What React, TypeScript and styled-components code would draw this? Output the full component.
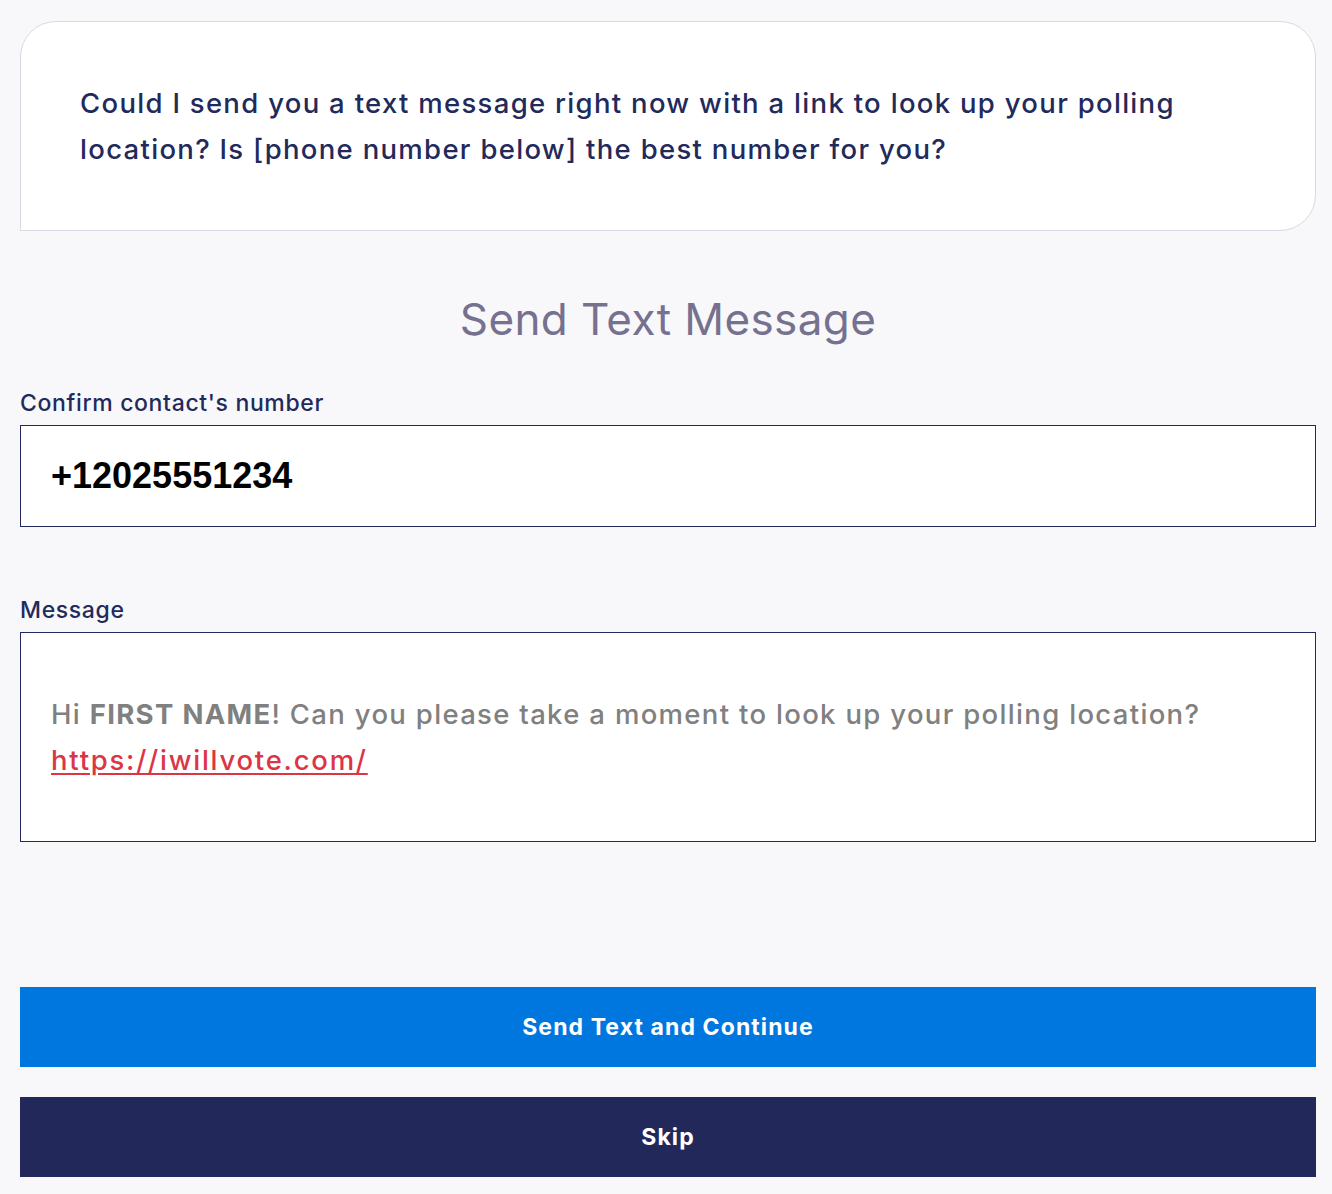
import * as React from 'react'
import styled, { createGlobalStyle } from 'styled-components'

const GlobalStyle = createGlobalStyle`
  html, body {
    margin: 0;
    padding: 0;
    background: #f8f8fa;
  }
  body {
    font-family: Inter, 'Noto Sans', sans-serif;
  }
  * {
    box-sizing: border-box;
  }
`

const SPage = styled.div`
  padding: 21px 16px 16px 20px;
  display: flex;
  flex-direction: column;
`

const SScriptCard = styled.div`
  background: #ffffff;
  border: 1px solid #d9d9e3;
  border-radius: 36px 36px 36px 0;
  padding: 58px 59px 0 59px;
  height: 210px;
  color: #222a5c;
  font-size: 27.5px;
  font-weight: 500;
  line-height: 46px;
  letter-spacing: 1.3px;
`

const STitle = styled.h2`
  margin: 62px 0 0;
  text-align: center;
  font-size: 44px;
  font-weight: 400;
  color: #75718f;
  line-height: 52px;
  letter-spacing: 0.4px;
`

const SField = styled.div<{ gap: number }>`
  display: flex;
  flex-direction: column;
  margin-top: ${({ gap }) => gap}px;
`

const SLabel = styled.label`
  font-size: 23px;
  font-weight: 500;
  color: #222a5c;
  line-height: 28px;
  letter-spacing: 0.65px;
  margin-bottom: 8px;
`

const SInput = styled.div`
  background: #ffffff;
  border: 1px solid #222a5c;
  height: 102px;
  display: flex;
  align-items: center;
  padding: 0 30px;
  font-family: 'Liberation Sans', Arial, sans-serif;
  font-weight: 700;
  font-size: 36px;
  color: #000000;
`

const STextArea = styled.div`
  background: #ffffff;
  border: 1px solid #222a5c;
  height: 210px;
  padding: 58px 30px 0;
  font-size: 27.5px;
  font-weight: 500;
  line-height: 46px;
  letter-spacing: 1.32px;
  color: #808080;
`

const SBold = styled.strong`
  font-weight: 700;
`

const SLink = styled.a`
  color: #dc3545;
  text-decoration: underline;
  text-underline-offset: 3px;
  letter-spacing: 1.75px;
`

const SButtons = styled.div`
  display: flex;
  flex-direction: column;
  gap: 30px;
  margin-top: 145px;
`

const SButton = styled.button<{ variant: 'primary' | 'dark' }>`
  height: 80px;
  border: none;
  background: ${({ variant }) => (variant === 'primary' ? '#0077df' : '#22295a')};
  color: #ffffff;
  font-family: Inter, 'Noto Sans', sans-serif;
  font-size: 23px;
  font-weight: 700;
  letter-spacing: 1.1px;
  cursor: pointer;
`

const App = () => {
  return (
    <>
      <GlobalStyle />
      <SPage>
        <SScriptCard>
          Could I send you a text message right now with a link to look up your polling
          location? Is [phone number below] the best number for you?
        </SScriptCard>
        <STitle>Send Text Message</STitle>
        <SField gap={44}>
          <SLabel>Confirm contact's number</SLabel>
          <SInput>+12025551234</SInput>
        </SField>
        <SField gap={69}>
          <SLabel>Message</SLabel>
          <STextArea>
            Hi <SBold>FIRST NAME</SBold>! Can you please take a moment to look up your polling location?{' '}
            <SLink href="#">https://iwillvote.com/</SLink>
          </STextArea>
        </SField>
        <SButtons>
          <SButton variant="primary">Send Text and Continue</SButton>
          <SButton variant="dark">Skip</SButton>
        </SButtons>
      </SPage>
    </>
  )
}

export default App
